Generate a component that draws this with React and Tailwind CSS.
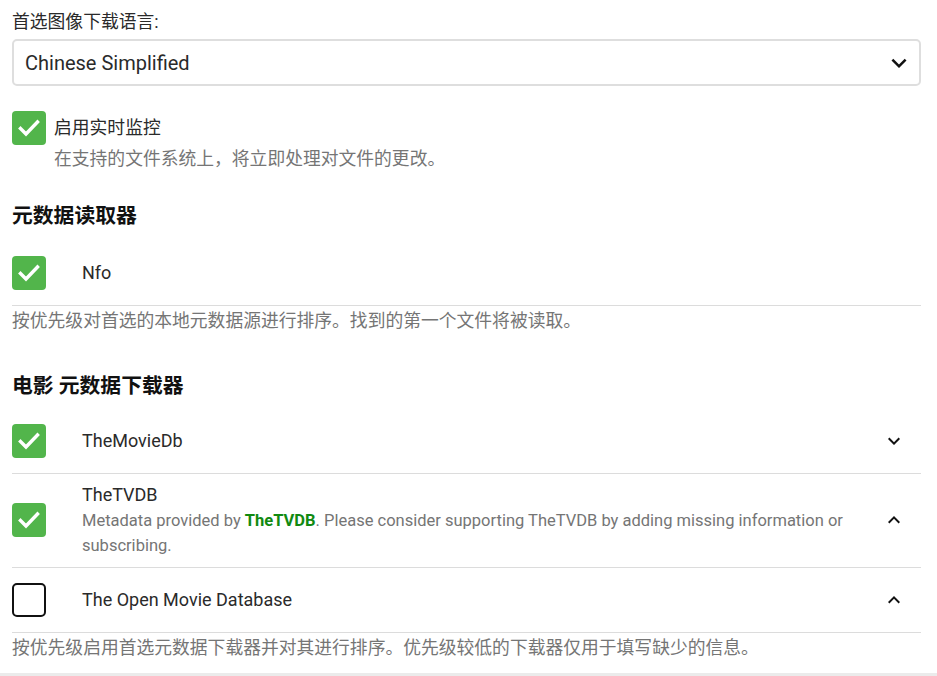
import React from "react";

const FONT = { fontFamily: "Roboto, 'Noto Sans CJK SC', sans-serif" };

function Check({ checked = true }) {
  if (!checked) {
    return <div className="w-[34px] h-[34px] shrink-0 rounded-[5px] border-2 border-[#111] bg-white" />;
  }
  return (
    <div className="w-[34px] h-[34px] shrink-0 rounded-[4px] bg-[#52b54b] flex items-center justify-center">
      <svg width="34" height="34" viewBox="0 0 34 34">
        <polyline points="8.5,17.5 14,23 25.5,11" fill="none" stroke="white" strokeWidth="3.4" strokeLinecap="square" />
      </svg>
    </div>
  );
}

function ChevDown({ size = 24 }) {
  return (
    <svg width={size} height={size} viewBox="0 0 24 24" fill="#111">
      <path d="M7.41 8.59 12 13.17l4.59-4.58L18 10l-6 6-6-6 1.41-1.41z" />
    </svg>
  );
}
function ChevUp({ size = 24 }) {
  return (
    <svg width={size} height={size} viewBox="0 0 24 24" fill="#111">
      <path d="M12 8l-6 6 1.41 1.41L12 10.83l4.59 4.58L18 14z" />
    </svg>
  );
}

function Row({ checked, name, up, children }) {
  return (
    <div className="flex items-center min-h-[65px] pt-[8px] pb-[9px] border-b border-[#dcdcdc]">
      <Check checked={checked} />
      <div className="flex-1 pl-[36px]">
        <div className="text-[18px] leading-[26px] text-[#2a2a2a]">{name}</div>
        {children}
      </div>
      {up !== undefined && (
        <div className="w-[48px] mr-[3px] flex items-center justify-center">
          {up ? <ChevUp /> : <ChevDown />}
        </div>
      )}
    </div>
  );
}

export default function App() {
  return (
    <div className="w-[937px] h-[676px] bg-white overflow-hidden" style={FONT}>
      <div className="pl-3 pr-4 pt-[10px]">
        <div className="text-[17.8px] leading-[24px] text-[#2a2a2a]">首选图像下载语言:</div>
        <div className="mt-[5px] h-[47px] border-2 border-[#dedede] rounded-[5px] flex items-center pl-[11px] pr-[5px]">
          <span className="flex-1 text-[20px] text-[#2a2a2a]">Chinese Simplified</span>
          <ChevDown size={30} />
        </div>

        <div className="mt-[25px] flex">
          <Check />
          <div className="pl-2">
            <div className="text-[17.8px] leading-[33px] text-[#2a2a2a]">启用实时监控</div>
            <div className="mt-[3px] text-[17.8px] leading-[24px] text-[#757575]">在支持的文件系统上，将立即处理对文件的更改。</div>
          </div>
        </div>

        <div className="mt-[30px] text-[20.8px] leading-[30px] font-bold text-[#111]">元数据读取器</div>
        <div className="mt-[10px]">
          <Row checked name="Nfo" />
        </div>
        <div className="mt-[3px] text-[17.8px] leading-[24px] text-[#757575]">按优先级对首选的本地元数据源进行排序。找到的第一个文件将被读取。</div>

        <div className="mt-[38px] text-[20.8px] leading-[30px] font-bold text-[#111]">电影 元数据下载器</div>
        <div className="mt-[8px]">
          <Row checked name="TheMovieDb" up={false} />
          <Row checked name="TheTVDB" up={true}>
            <div className="text-[16.5px] leading-[25px] text-[#757575] pr-4">
              Metadata provided by <span className="font-bold text-[#118a11]">TheTVDB</span>. Please consider supporting TheTVDB by adding missing information or subscribing.
            </div>
          </Row>
          <Row checked={false} name="The Open Movie Database" up={true} />
        </div>
        <div className="mt-[3px] text-[17.8px] leading-[24px] text-[#757575]">按优先级启用首选元数据下载器并对其进行排序。优先级较低的下载器仅用于填写缺少的信息。</div>
      </div>
      <div className="mt-[13px] h-[20px] bg-[#ebebeb]" />
    </div>
  );
}
